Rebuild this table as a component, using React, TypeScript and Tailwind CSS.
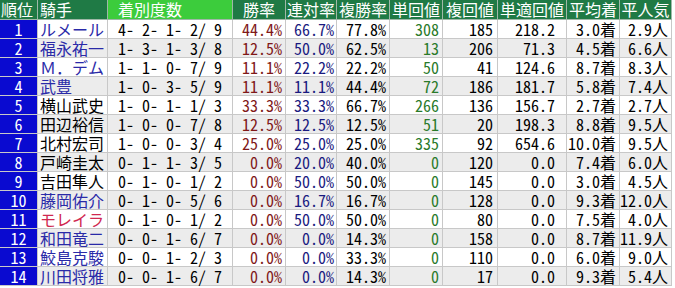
import React from 'react'

type Row = {
  rank: number
  name: string
  nameColor: 'blue' | 'black' | 'red'
  record: string
  win: string
  place: string
  show: string
  winRet: string
  showRet: string
  fitRet: string
  avgPos: string
  avgPop: string
}

const rows: Row[] = [
  { rank: 1, name: 'ルメール', nameColor: 'blue', record: '4- 2- 1- 2/ 9', win: '44.4%', place: '66.7%', show: '77.8%', winRet: '308', showRet: '185', fitRet: '218.2', avgPos: '3.0着', avgPop: '2.9人' },
  { rank: 2, name: '福永祐一', nameColor: 'blue', record: '1- 3- 1- 3/ 8', win: '12.5%', place: '50.0%', show: '62.5%', winRet: '13', showRet: '206', fitRet: '71.3', avgPos: '4.5着', avgPop: '6.6人' },
  { rank: 3, name: 'Ｍ．デム', nameColor: 'blue', record: '1- 1- 0- 7/ 9', win: '11.1%', place: '22.2%', show: '22.2%', winRet: '50', showRet: '41', fitRet: '124.6', avgPos: '8.7着', avgPop: '8.3人' },
  { rank: 4, name: '武豊', nameColor: 'blue', record: '1- 0- 3- 5/ 9', win: '11.1%', place: '11.1%', show: '44.4%', winRet: '72', showRet: '186', fitRet: '181.7', avgPos: '5.8着', avgPop: '7.4人' },
  { rank: 5, name: '横山武史', nameColor: 'black', record: '1- 0- 1- 1/ 3', win: '33.3%', place: '33.3%', show: '66.7%', winRet: '266', showRet: '136', fitRet: '156.7', avgPos: '2.7着', avgPop: '2.7人' },
  { rank: 6, name: '田辺裕信', nameColor: 'black', record: '1- 0- 0- 7/ 8', win: '12.5%', place: '12.5%', show: '12.5%', winRet: '51', showRet: '20', fitRet: '198.3', avgPos: '8.8着', avgPop: '9.5人' },
  { rank: 7, name: '北村宏司', nameColor: 'black', record: '1- 0- 0- 3/ 4', win: '25.0%', place: '25.0%', show: '25.0%', winRet: '335', showRet: '92', fitRet: '654.6', avgPos: '10.0着', avgPop: '9.5人' },
  { rank: 8, name: '戸崎圭太', nameColor: 'black', record: '0- 1- 1- 3/ 5', win: '0.0%', place: '20.0%', show: '40.0%', winRet: '0', showRet: '120', fitRet: '0.0', avgPos: '7.4着', avgPop: '6.0人' },
  { rank: 9, name: '吉田隼人', nameColor: 'black', record: '0- 1- 0- 1/ 2', win: '0.0%', place: '50.0%', show: '50.0%', winRet: '0', showRet: '145', fitRet: '0.0', avgPos: '3.0着', avgPop: '4.5人' },
  { rank: 10, name: '藤岡佑介', nameColor: 'blue', record: '0- 1- 0- 5/ 6', win: '0.0%', place: '16.7%', show: '16.7%', winRet: '0', showRet: '128', fitRet: '0.0', avgPos: '9.3着', avgPop: '12.0人' },
  { rank: 11, name: 'モレイラ', nameColor: 'red', record: '0- 1- 0- 1/ 2', win: '0.0%', place: '50.0%', show: '50.0%', winRet: '0', showRet: '80', fitRet: '0.0', avgPos: '7.5着', avgPop: '4.0人' },
  { rank: 12, name: '和田竜二', nameColor: 'blue', record: '0- 0- 1- 6/ 7', win: '0.0%', place: '0.0%', show: '14.3%', winRet: '0', showRet: '158', fitRet: '0.0', avgPos: '8.7着', avgPop: '11.9人' },
  { rank: 13, name: '鮫島克駿', nameColor: 'blue', record: '0- 0- 1- 2/ 3', win: '0.0%', place: '0.0%', show: '33.3%', winRet: '0', showRet: '110', fitRet: '0.0', avgPos: '6.0着', avgPop: '9.0人' },
  { rank: 14, name: '川田将雅', nameColor: 'blue', record: '0- 0- 1- 6/ 7', win: '0.0%', place: '0.0%', show: '14.3%', winRet: '0', showRet: '17', fitRet: '0.0', avgPos: '9.3着', avgPop: '5.4人' },
]

const nameColors = {
  blue: 'text-[#2a2aa8]',
  black: 'text-black',
  red: 'text-[#d02850]',
}

const head = 'h-[20px] leading-[19px] border-r border-b border-[#9fb8a8] text-white bg-[#1f7a45] whitespace-nowrap'
const cell = 'h-[19px] leading-[19px] border-r border-b border-[#c8c8c8] whitespace-nowrap'

export default function App() {
  return (
    <div
      className="w-[675px] h-[288px] bg-white text-[16px] text-black"
      style={{ fontFamily: '"Noto Sans Mono CJK JP", "Noto Sans CJK JP", monospace' }}
    >
      <div className="grid w-[672px] grid-cols-[38px_70px_125px_53px_51px_53px_53px_55px_69px_53px_52px]">
        <div className={`${head} pl-[1px]`}>順位</div>
        <div className={`${head} pl-[2px]`}>騎手</div>
        <div className={`${head} pl-[10px] bg-[#3ccc3c] text-black`}>着別度数</div>
        <div className={`${head} text-center`}>勝率</div>
        <div className={`${head} text-center`}>連対率</div>
        <div className={`${head} text-center`}>複勝率</div>
        <div className={`${head} text-center`}>単回値</div>
        <div className={`${head} text-center`}>複回値</div>
        <div className={`${head} text-center`}>単適回値</div>
        <div className={`${head} text-center`}>平均着</div>
        <div className={`${head} text-center`}>平人気</div>

        {rows.map((r, i) => {
          const bg = i % 2 === 1 ? 'bg-[#ececec]' : 'bg-white'
          return (
            <React.Fragment key={r.rank}>
              <div className={`${cell} bg-[#0a0ad0] border-[#6a6ad8] text-white text-center`}>{r.rank}</div>
              <div className={`${cell} ${bg} ${nameColors[r.nameColor]} pl-[2px]`}>{r.name}</div>
              <div className={`${cell} ${bg} text-center whitespace-pre`}>{r.record}</div>
              <div className={`${cell} ${bg} text-right pr-[3px] text-[#801818]`}>{r.win}</div>
              <div className={`${cell} ${bg} text-right pr-[2px] text-[#1a1a80]`}>{r.place}</div>
              <div className={`${cell} ${bg} text-right pr-[3px]`}>{r.show}</div>
              <div className={`${cell} ${bg} text-right pr-[3px] text-[#2a7a2a]`}>{r.winRet}</div>
              <div className={`${cell} ${bg} text-right pr-[4px]`}>{r.showRet}</div>
              <div className={`${cell} ${bg} text-right pr-[11px]`}>{r.fitRet}</div>
              <div className={`${cell} ${bg} text-right pr-[3px]`}>{r.avgPos}</div>
              <div className={`${cell} ${bg} text-right pr-[3px]`}>{r.avgPop}</div>
            </React.Fragment>
          )
        })}
      </div>
    </div>
  )
}
